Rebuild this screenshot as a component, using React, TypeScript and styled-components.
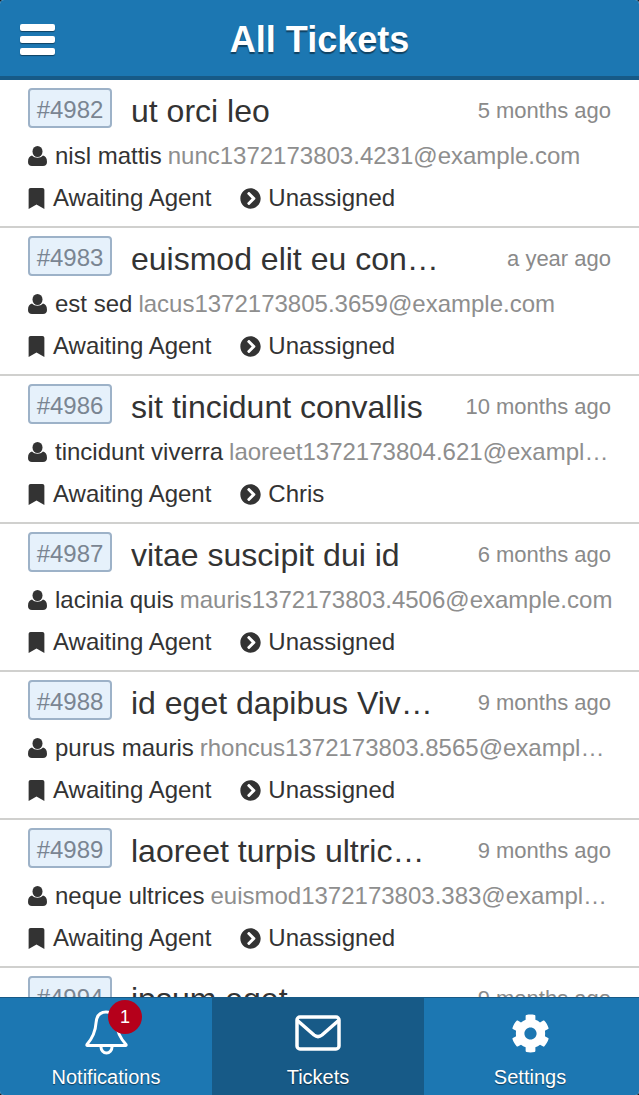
import React from 'react';
import styled, { createGlobalStyle } from 'styled-components';
import { FaBookmark, FaChevronCircleRight, FaCog } from 'react-icons/fa';

const tickets = [
  { id: 4982, title: 'ut orci leo', time: '5 months ago', name: 'nisl mattis', email: 'nunc1372173803.4231@example.com', owner: 'Unassigned' },
  { id: 4983, title: 'euismod elit eu congue', time: 'a year ago', name: 'est sed', email: 'lacus1372173805.3659@example.com', owner: 'Unassigned' },
  { id: 4986, title: 'sit tincidunt convallis', time: '10 months ago', name: 'tincidunt viverra', email: 'laoreet1372173804.621@example.com', owner: 'Chris' },
  { id: 4987, title: 'vitae suscipit dui id', time: '6 months ago', name: 'lacinia quis', email: 'mauris1372173803.4506@example.com', owner: 'Unassigned' },
  { id: 4988, title: 'id eget dapibus Vivamus', time: '9 months ago', name: 'purus mauris', email: 'rhoncus1372173803.8565@example.com', owner: 'Unassigned' },
  { id: 4989, title: 'laoreet turpis ultric…', time: '9 months ago', name: 'neque ultrices', email: 'euismod1372173803.383@example.com', owner: 'Unassigned' },
  { id: 4994, title: 'ipsum eget', time: '9 months ago', name: 'at lorem', email: 'sed1372173803.112@example.com', owner: 'Unassigned' },
];

const UserGlyph = () => (
  <UserSvg viewBox="0 0 19 20" aria-hidden="true">
    <ellipse cx="9.5" cy="5.5" rx="5" ry="5.5" />
    <path d="M0 16c0-4 1.500-6 4-6.500 1.500 1.500 3.300 2.200 5.500 2.200s4-.7 5.500-2.200c2.500.5 4 2.500 4 6.500 0 2.500-1.500 4-4 4H4c-2.500 0-4-1.500-4-4z" />
  </UserSvg>
);

const App = (): React.ReactElement => (
  <Screen>
    <GlobalStyle />
    <Header>
      <MenuButton aria-label="Menu">
        <MenuBar />
        <MenuBar />
        <MenuBar />
      </MenuButton>
      <Title>All Tickets</Title>
    </Header>
    <List>
      {tickets.map((ticket) => (
        <Row key={ticket.id}>
          <TopLine>
            <IdBadge>#{ticket.id}</IdBadge>
            <Subject>{ticket.title}</Subject>
            <Time>{ticket.time}</Time>
          </TopLine>
          <Requester>
            <UserGlyph />
            <Name>{ticket.name}</Name>
            <Email>{ticket.email}</Email>
          </Requester>
          <Meta>
            <MetaItem>
              <BookmarkIcon />
              Awaiting Agent
            </MetaItem>
            <MetaItem>
              <ChevronIcon />
              {ticket.owner}
            </MetaItem>
          </Meta>
        </Row>
      ))}
    </List>
    <TabBar>
      <Tab>
        <TabIcon>
          <svg width="44" height="48" viewBox="0 0 44 48" fill="none" stroke="#fff" strokeWidth="3" strokeLinejoin="round" strokeLinecap="round">
            <path d="M22 3c-6 0-9.500 4-10 11-.5 9-3.500 15-9 21.500q-.5 1 .5 1h38q1 0 .5-1C36 29 33 23 32.500 14 32 7 28 3 22 3z" />
            <path d="M17 38a5.500 6 0 0 0 11 0" />
          </svg>
          <Badge>1</Badge>
        </TabIcon>
        <TabLabel>Notifications</TabLabel>
      </Tab>
      <Tab $active>
        <TabIcon>
          <svg width="46" height="36" viewBox="0 0 46 36" fill="none" stroke="#fff" strokeWidth="3.500" strokeLinejoin="round" strokeLinecap="round">
            <rect x="2" y="2" width="42" height="32" rx="3" />
            <path d="M3 6l16 14c2.500 2 5.500 2 8 0L43 6" />
          </svg>
        </TabIcon>
        <TabLabel>Tickets</TabLabel>
      </Tab>
      <Tab>
        <TabIcon>
          <FaCog size={39} color="#fff" />
        </TabIcon>
        <TabLabel>Settings</TabLabel>
      </Tab>
    </TabBar>
  </Screen>
);

const GlobalStyle = createGlobalStyle`
  html, body {
    margin: 0;
    padding: 0;
    background: #10202c;
  }
  * {
    box-sizing: border-box;
  }
`;

const Screen = styled.div`
  display: flex;
  flex-direction: column;
  width: 639px;
  height: 1095px;
  overflow: hidden;
  border-radius: 4px;
  background: #fff;
  font-family: 'Liberation Sans', Arial, sans-serif;
  color: #333;
`;

const Header = styled.header`
  flex: none;
  display: grid;
  grid-template-columns: 1fr;
  align-items: center;
  height: 80px;
  background: #1c77b2;
  border-bottom: 4px solid #175a87;
`;

const MenuButton = styled.div`
  grid-area: 1 / 1;
  justify-self: start;
  display: flex;
  flex-direction: column;
  gap: 5px;
  margin: 2px 0 0 20px;
`;

const MenuBar = styled.span`
  display: block;
  width: 35px;
  height: 7px;
  border-radius: 2px;
  background: #fff;
  box-shadow: 0 1px 1px rgba(0, 0, 0, 0.45);
`;

const Title = styled.h1`
  grid-area: 1 / 1;
  margin: 4px 0 0;
  text-align: center;
  font-size: 36px;
  font-weight: 700;
  color: #fff;
  text-shadow: 0 2px 1px rgba(0, 0, 0, 0.45);
`;

const List = styled.main`
  flex: 1;
  min-height: 0;
  overflow: hidden;
`;

const Row = styled.article`
  height: 148px;
  padding: 8px 28px 0;
  border-bottom: 2px solid #d0d0ce;
`;

const TopLine = styled.div`
  display: flex;
  align-items: center;
  height: 40px;
`;

const IdBadge = styled.span`
  flex: none;
  display: flex;
  align-items: center;
  justify-content: center;
  width: 84px;
  height: 40px;
  padding-top: 3px;
  border: 2px solid #9db2c8;
  border-radius: 4px;
  background: #e6f1fb;
  color: #7a8592;
  font-size: 24px;
`;

const Subject = styled.span`
  flex: none;
  width: 310px;
  margin: 7px 0 0 19px;
  font-size: 32px;
  color: #333;
  white-space: nowrap;
  overflow: hidden;
  text-overflow: ellipsis;
`;

const Time = styled.span`
  flex: none;
  margin: 6px 0 0 auto;
  font-size: 22px;
  color: #8a8a8a;
`;

const Requester = styled.div`
  display: flex;
  align-items: center;
  height: 28px;
  margin: 14px -4px 0 0;
  font-size: 24px;
  white-space: nowrap;
`;

const Name = styled.span`
  flex: none;
  margin: 0 6px 0 8px;
  color: #333;
`;

const Email = styled.span`
  min-width: 0;
  overflow: hidden;
  text-overflow: ellipsis;
  color: #8e8e8e;
`;

const UserSvg = styled.svg`
  flex: none;
  width: 19px;
  height: 20px;
  margin-top: -1px;
  fill: #333;
`;

const Meta = styled.div`
  display: flex;
  gap: 29px;
  height: 28px;
  margin-top: 14px;
  font-size: 24px;
`;

const MetaItem = styled.span`
  display: flex;
  align-items: center;
  gap: 8px;
  color: #333;
`;

const BookmarkIcon = styled(FaBookmark)`
  width: 17px;
  height: 21px;
  color: #333;
`;

const ChevronIcon = styled(FaChevronCircleRight)`
  width: 21px;
  height: 21px;
  margin-right: -1px;
  color: #333;
`;

const TabBar = styled.nav`
  flex: none;
  display: grid;
  grid-template-columns: 212px 212px 212px;
  height: 98px;
  background: #1c77b2;
  border-top: 1px solid #175a87;
`;

const Tab = styled.div<{ $active?: boolean }>`
  display: flex;
  flex-direction: column;
  align-items: center;
  background: ${({ $active }) => ($active ? '#175a87' : 'transparent')};
`;

const TabIcon = styled.div`
  position: relative;
  display: flex;
  align-items: center;
  justify-content: center;
  height: 52px;
  margin-top: 9px;
`;

const Badge = styled.span`
  position: absolute;
  top: -7px;
  left: 24px;
  display: flex;
  align-items: center;
  justify-content: center;
  width: 34px;
  height: 34px;
  border-radius: 50%;
  background: #b5001b;
  color: #fff;
  font-size: 18px;
`;

const TabLabel = styled.span`
  margin-top: 7px;
  font-size: 20px;
  color: #fff;
  text-shadow: 0 1px 1px rgba(0, 0, 0, 0.5);
`;

export default App;
